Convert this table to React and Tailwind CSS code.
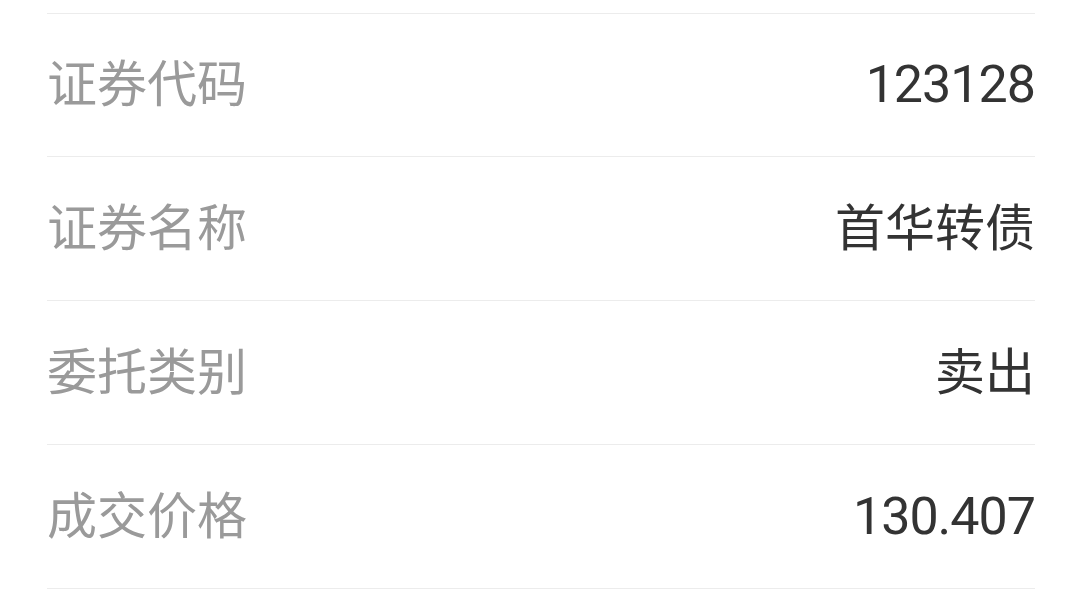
import React from "react";

const rows = [
  { label: "证券代码", value: "123128", num: true },
  { label: "证券名称", value: "首华转债" },
  { label: "委托类别", value: "卖出" },
  { label: "成交价格", value: "130.407", num: true },
];

const App = () => {
  return (
    <div
      className="w-[1080px] h-[599px] overflow-hidden bg-white pt-[13px]"
      style={{ fontFamily: 'Roboto, "Noto Sans CJK SC", sans-serif' }}
    >
      <div className="ml-[47px] mr-[45px] border-t border-[#ececec]">
        {rows.map((row, i) => (
          <div
            key={row.label}
            className={
              i === 0
                ? "h-[143px] flex items-center justify-between border-b border-[#ececec]"
                : "h-[144px] flex items-center justify-between border-b border-[#ececec]"
            }
          >
            <span className="text-[50px] text-[#9a9a9a] leading-none">{row.label}</span>
            {row.num ? (
              <span className="text-[52px] text-[#333333] leading-none tracking-[-1px]">{row.value}</span>
            ) : (
              <span className="text-[50px] text-[#333333] leading-none">{row.value}</span>
            )}
          </div>
        ))}
      </div>
    </div>
  );
};

export default App;
